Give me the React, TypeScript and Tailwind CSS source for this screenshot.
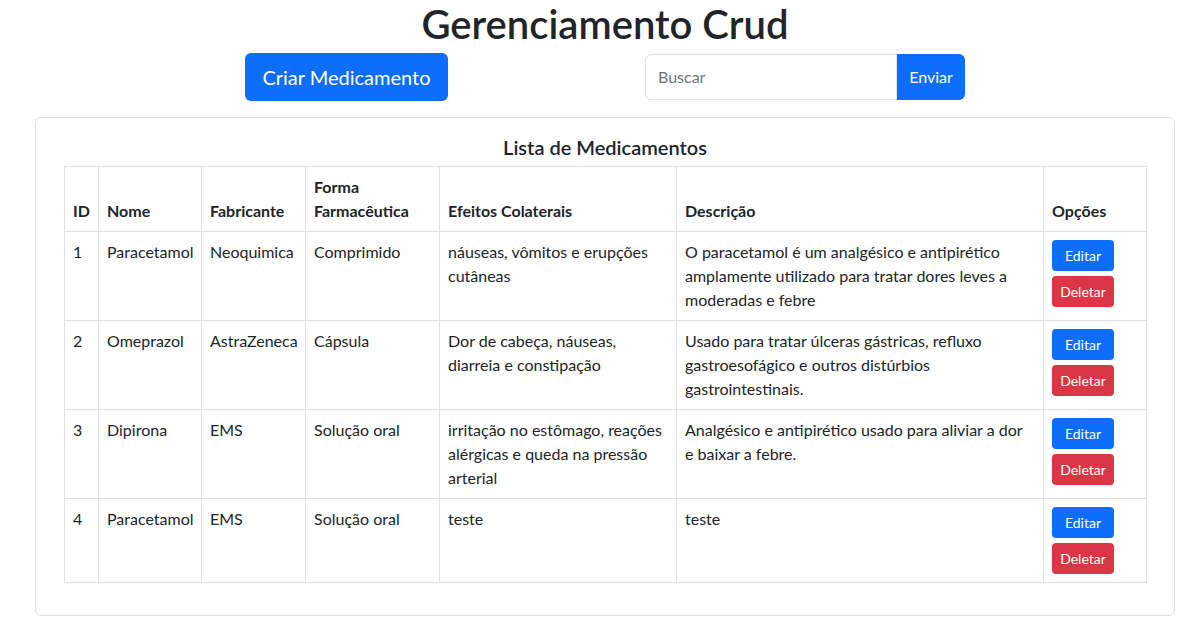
import React from 'react';

interface Medicamento {
  id: number;
  nome: string;
  fabricante: string;
  forma: string;
  efeitos: string[];
  descricao: string[];
}

const MEDICAMENTOS: Medicamento[] = [
  {
    id: 1,
    nome: 'Paracetamol',
    fabricante: 'Neoquimica',
    forma: 'Comprimido',
    efeitos: ['náuseas, vômitos e erupções', 'cutâneas'],
    descricao: [
      'O paracetamol é um analgésico e antipirético',
      'amplamente utilizado para tratar dores leves a',
      'moderadas e febre',
    ],
  },
  {
    id: 2,
    nome: 'Omeprazol',
    fabricante: 'AstraZeneca',
    forma: 'Cápsula',
    efeitos: ['Dor de cabeça, náuseas,', 'diarreia e constipação'],
    descricao: [
      'Usado para tratar úlceras gástricas, refluxo',
      'gastroesofágico e outros distúrbios',
      'gastrointestinais.',
    ],
  },
  {
    id: 3,
    nome: 'Dipirona',
    fabricante: 'EMS',
    forma: 'Solução oral',
    efeitos: ['irritação no estômago, reações', 'alérgicas e queda na pressão', 'arterial'],
    descricao: ['Analgésico e antipirético usado para aliviar a dor', 'e baixar a febre.'],
  },
  {
    id: 4,
    nome: 'Paracetamol',
    fabricante: 'EMS',
    forma: 'Solução oral',
    efeitos: ['teste'],
    descricao: ['teste'],
  },
];

const Lines = ({ lines }: { lines: string[] }) => (
  <>
    {lines.map((l) => (
      <span key={l} className="block whitespace-nowrap">
        {l}
      </span>
    ))}
  </>
);

const th = 'border border-[#dee2e6] px-2 py-2 align-bottom text-left font-bold';
const td = 'border border-[#dee2e6] px-2 py-2 align-top';

export default function App() {
  return (
    <div
      className="w-[1210px] bg-white text-[#212529] text-[16px] leading-[24px]"
      style={{ fontFamily: 'Lato, "Noto Sans", sans-serif' }}
    >
      {/* Header */}
      <h1 className="text-center text-[40px] leading-[48px] font-semibold">Gerenciamento Crud</h1>

      <div className="mt-[5px] flex justify-center gap-[197px]">
        <button className="h-[48px] w-[203px] rounded-md bg-[#0d6efd] text-[20px] text-white">
          Criar Medicamento
        </button>
        <div className="mt-[1px] flex h-[46px] w-[320px]">
          <input
            placeholder="Buscar"
            className="w-[252px] rounded-l-md border border-[#dee2e6] px-3 text-[16px] placeholder:text-[#6c757d] outline-none"
          />
          <button className="w-[68px] rounded-r-md bg-[#0d6efd] text-[16px] text-white">Enviar</button>
        </div>
      </div>

      {/* Card */}
      <div className="mx-auto mt-[16px] w-[1140px] rounded-md border border-[#dee2e6] px-[28px] pt-[17px] pb-[32px]">
        <h5 className="mb-[7px] text-center text-[20px] leading-[24px] font-semibold">Lista de Medicamentos</h5>

        <table className="w-[1082px] table-fixed border-collapse border border-[#dee2e6]">
          <colgroup>
            <col className="w-[34px]" />
            <col className="w-[103px]" />
            <col className="w-[104px]" />
            <col className="w-[134px]" />
            <col className="w-[237px]" />
            <col className="w-[367px]" />
            <col className="w-[103px]" />
          </colgroup>
          <thead>
            <tr>
              <th className={th}>ID</th>
              <th className={th}>Nome</th>
              <th className={th}>Fabricante</th>
              <th className={th}>
                <Lines lines={['Forma', 'Farmacêutica']} />
              </th>
              <th className={th}>Efeitos Colaterais</th>
              <th className={th}>Descrição</th>
              <th className={th}>Opções</th>
            </tr>
          </thead>
          <tbody>
            {MEDICAMENTOS.map((m) => (
              <tr key={m.id}>
                <td className={td}>{m.id}</td>
                <td className={td + ' whitespace-nowrap'}>{m.nome}</td>
                <td className={td + ' whitespace-nowrap'}>{m.fabricante}</td>
                <td className={td + ' whitespace-nowrap'}>{m.forma}</td>
                <td className={td}>
                  <Lines lines={m.efeitos} />
                </td>
                <td className={td}>
                  <Lines lines={m.descricao} />
                </td>
                <td className={td}>
                  <div className="flex flex-col gap-[5px]">
                    <button className="h-[31px] w-[62px] rounded bg-[#0d6efd] text-[14px] text-white">Editar</button>
                    <button className="h-[31px] w-[62px] rounded bg-[#dc3545] text-[14px] text-white">Deletar</button>
                  </div>
                </td>
              </tr>
            ))}
          </tbody>
        </table>
      </div>
    </div>
  );
}
